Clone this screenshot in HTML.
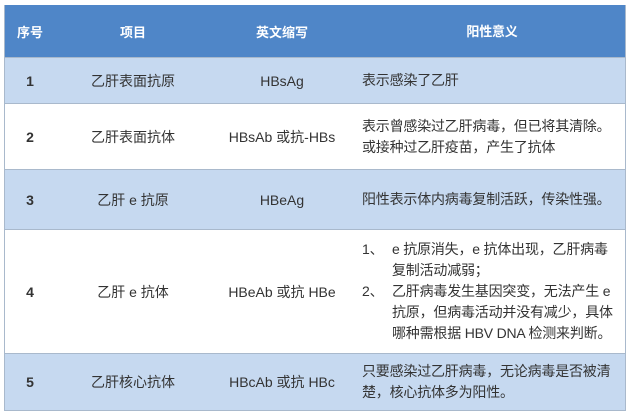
<!DOCTYPE html>
<html><head><meta charset="utf-8"><style>
body{margin:0;width:632px;height:416px;background:#fff;position:relative;overflow:hidden;font-family:"Liberation Sans","Noto Sans CJK SC",sans-serif;color:#333;font-size:14px}
.r{position:absolute;left:4px;width:622px;border-bottom:1px solid #a9b9cc;box-sizing:border-box}
.hd{background:#4f86c8;color:#fff;font-weight:bold;font-size:13px}
.b{background:#c6d9f0}
.w{background:#fff}
.c{position:absolute;top:0;bottom:0;display:flex;align-items:center;justify-content:center;text-align:center}
.c1{left:0;width:52px;font-weight:bold}
.c2{left:52px;width:154px}
.c3{left:202px;width:152px}
.c4{left:354px;width:268px;justify-content:flex-start;text-align:left;line-height:21px;padding-left:4px;box-sizing:border-box;letter-spacing:-0.2px}
.hd .c4{justify-content:center;padding:0}
.frame{position:absolute;left:4px;top:5px;width:622px;height:406px;border:1px solid #a9b9cc;border-top:none;box-sizing:border-box;pointer-events:none}
</style></head><body>
<div class="r hd" style="top:5px;height:53px"><div class="c c1">序号</div><div class="c c2">项目</div><div class="c c3">英文缩写</div><div class="c c4">阳性意义</div></div>
<div class="r b" style="top:58px;height:46px"><div class="c c1">1</div><div class="c c2">乙肝表面抗原</div><div class="c c3">HBsAg</div><div class="c c4">表示感染了乙肝</div></div>
<div class="r w" style="top:104px;height:66px"><div class="c c1">2</div><div class="c c2">乙肝表面抗体</div><div class="c c3">HBsAb 或抗-HBs</div><div class="c c4"><div>表示曾感染过乙肝病毒，但已将其清除。<br>或接种过乙肝疫苗，产生了抗体</div></div></div>
<div class="r b" style="top:170px;height:60px"><div class="c c1">3</div><div class="c c2">乙肝 e 抗原</div><div class="c c3">HBeAg</div><div class="c c4">阳性表示体内病毒复制活跃，传染性强。</div></div>
<div class="r w" style="top:230px;height:124px"><div class="c c1">4</div><div class="c c2">乙肝 e 抗体</div><div class="c c3">HBeAb 或抗 HBe</div><div class="c c4"><div>
<div style="display:flex"><span style="width:30px;flex:none">1、</span><span>e 抗原消失，e 抗体出现，乙肝病毒<br>复制活动减弱；</span></div>
<div style="display:flex"><span style="width:30px;flex:none">2、</span><span>乙肝病毒发生基因突变，无法产生 e<br>抗原，但病毒活动并没有减少，具体<br>哪种需根据 HBV DNA 检测来判断。</span></div>
</div></div></div>
<div class="r b" style="top:354px;height:57px"><div class="c c1">5</div><div class="c c2">乙肝核心抗体</div><div class="c c3">HBcAb 或抗 HBc</div><div class="c c4"><div>只要感染过乙肝病毒，无论病毒是否被清<br>楚，核心抗体多为阳性。</div></div></div>
<div class="frame"></div>
</body></html>
